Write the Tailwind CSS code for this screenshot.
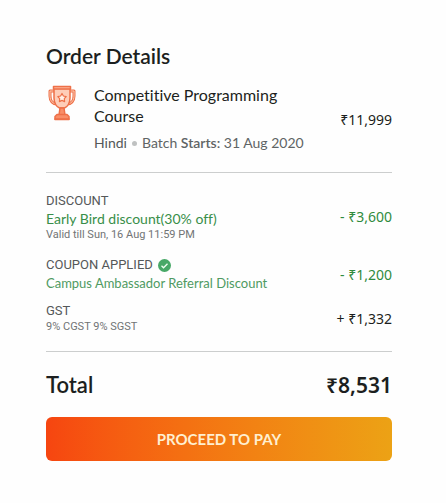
<!DOCTYPE html>
<html lang="en">
<head>
<meta charset="utf-8">
<meta name="viewport" content="width=device-width, initial-scale=1">
<title>Order Details</title>
<script src="https://cdn.jsdelivr.net/npm/@tailwindcss/browser@4"></script>
</head>
<body class="min-h-screen bg-[#fefefe] font-['Lato','Noto_Sans',sans-serif] text-[#1c1f20] [font-variant-ligatures:none]">
<main class="pt-10 pr-[54px] pb-10 pl-[46px]">
  <h1 class="text-[21px] leading-8 font-semibold">Order Details</h1>

  <section class="mt-3 flex items-start">
    <svg class="mt-px ml-[2px] h-9 w-7 shrink-0" viewBox="0 0 28 36" fill="none" stroke="#ee7048" stroke-width="1.5" stroke-linejoin="round" stroke-linecap="round" aria-hidden="true">
      <path d="M6 6H2v5c0 5 3 8 7 8M22 6h4v5c0 5-3 8-7 8" stroke-width="3"/>
      <path d="M6 6H2v5c0 5 3 8 7 8M22 6h4v5c0 5-3 8-7 8" stroke="#fdc9b0" stroke-width="1"/>
      <path d="M6 3.500h16v9.500c0 5-2.500 9-5.500 10h-5C8.500 22 6 18 6 13z" fill="#fecdb8"/>
      <path d="M5.500 1.500h17v2.500h-17z" fill="#fdb598"/>
      <path d="M12 23h4l1 7h-6z" fill="#f98e68"/>
      <path d="M9 29.500h10l2 2v3H7v-3z" fill="#f98e68"/>
      <path d="M7 34h14"/>
      <path d="M14 8.500l1.400 2.500 2.800.600-1.900 2.100.300 2.900-2.600-1.200-2.600 1.200.300-2.900-1.900-2.100 2.800-.600z" fill="#fff1e9" stroke-width="1.200"/>
    </svg>
    <div class="ml-[18px] min-w-0 flex-1">
      <h2 class="max-w-52 text-base leading-[21px]">Competitive Programming Course</h2>
      <p class="mt-[7px] flex items-center text-sm leading-5 whitespace-nowrap text-[#606465]">
        <span class="text-[#555859]">Hindi</span>
        <span class="mx-[5px] size-[5px] rounded-full bg-[#bfc1c1]"></span>
        <span>Batch <span class="font-semibold">Starts:</span> 31 Aug 2020</span>
      </p>
    </div>
    <p class="mt-[26px] text-sm leading-5 whitespace-nowrap font-['Noto_Sans',sans-serif]">₹11,999</p>
  </section>

  <dl class="mt-[19px] border-y border-[#cccece] pt-5 pb-4">
    <div class="flex items-center justify-between">
      <dt class="text-[#555859]">
        <p class="text-[13px] leading-4 font-['Roboto',sans-serif]">DISCOUNT</p>
        <p class="text-sm leading-5 text-[#388e49]">Early Bird discount(30% off)</p>
        <p class="text-[11px] leading-3 font-['Roboto',sans-serif] text-[#717475]">Valid till Sun, 16 Aug 11:59 PM</p>
      </dt>
      <dd class="text-sm leading-5 font-['Noto_Sans',sans-serif] text-[#2f8b3d]">- ₹3,600</dd>
    </div>
    <div class="mt-4 flex items-center justify-between">
      <dt class="text-[#555859]">
        <p class="flex items-center text-[13px] leading-4 font-['Roboto',sans-serif]">COUPON APPLIED
          <svg class="ml-[5px] size-[13px]" viewBox="0 0 13 13" fill="none" aria-hidden="true"><circle cx="6.500" cy="6.500" r="6.500" fill="#47a867"/><path d="M3.500 6.800l2 2 4-4" stroke="#effff2" stroke-width="1.300"/></svg>
        </p>
        <p class="text-[13px] leading-5 text-[#4f9a62]">Campus Ambassador Referral Discount</p>
      </dt>
      <dd class="text-sm leading-5 font-['Noto_Sans',sans-serif] text-[#2f8b3d]">- ₹1,200</dd>
    </div>
    <div class="mt-[10px] flex items-center justify-between">
      <dt class="font-['Roboto',sans-serif] text-[#555859]">
        <p class="text-[13px] leading-4">GST</p>
        <p class="text-[11px] leading-4 text-[#717475]">9% CGST 9% SGST</p>
      </dt>
      <dd class="text-sm leading-5 font-['Noto_Sans',sans-serif]">+ ₹1,332</dd>
    </div>
  </dl>

  <div class="mt-[17px] flex items-center justify-between font-semibold">
    <p class="text-[22px] leading-8">Total</p>
    <p class="text-[21px] leading-8 font-['Noto_Sans',sans-serif]">₹8,531</p>
  </div>

  <button type="button" class="mt-4 h-11 w-full rounded-md bg-linear-to-r from-[#f64510] to-[#eca215] text-[15px] font-bold text-[#ffefd0]">PROCEED TO PAY</button>
</main>
</body>
</html>
